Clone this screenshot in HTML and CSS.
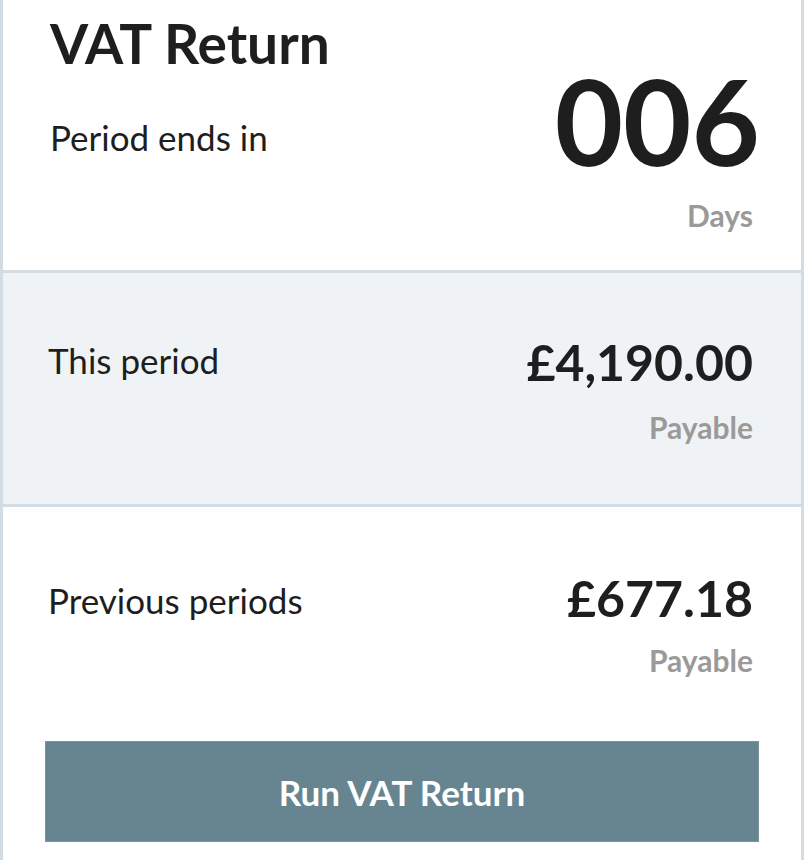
FILE: index.html
```html
<!DOCTYPE html>
<html>
<head>
<meta charset="utf-8">
<link rel="stylesheet" href="styles.css">
</head>
<body>
<div class="card">
  <section class="top">
    <div class="top-left">
      <h1 class="title">VAT Return</h1>
      <div class="label period">Period ends in</div>
    </div>
    <div class="top-right">
      <div class="days">006</div>
      <div class="sub">Days</div>
    </div>
  </section>
  <section class="row shaded">
    <div class="label">This period</div>
    <div class="amount-box">
      <div class="amount">£4,190.00</div>
      <div class="sub">Payable</div>
    </div>
  </section>
  <section class="bottom">
    <div class="row plain">
      <div class="label">Previous periods</div>
      <div class="amount-box">
        <div class="amount">£677.18</div>
        <div class="sub">Payable</div>
      </div>
    </div>
    <button class="btn">Run VAT Return</button>
  </section>
</div>
</body>
</html>
```
FILE: styles.css
```css
html, body {
  margin: 0;
  padding: 0;
  background: #ffffff;
}
body {
  font-family: Lato, "Open Sans", sans-serif;
  color: #1e1e1e;
}
.card {
  width: 804px;
  height: 860px;
  box-sizing: border-box;
  border-left: 3px solid #d3dce2;
  border-right: 3px solid #d3dce2;
  display: flex;
  flex-direction: column;
  overflow: hidden;
}
.top {
  height: 273px;
  box-sizing: border-box;
  border-bottom: 3px solid #d3dce2;
  display: flex;
  justify-content: space-between;
  padding: 0 48px 0 47px;
  flex-shrink: 0;
}
.title {
  margin: 10px 0 0 0;
  font-size: 55px;
  font-weight: 700;
  line-height: 1.2;
}
.label {
  font-size: 35px;
  font-weight: 400;
  line-height: 1.2;
}
.period {
  margin-top: 40px;
}
.top-right {
  display: flex;
  flex-direction: column;
  align-items: flex-end;
}
.days {
  font-size: 118px;
  font-weight: 700;
  line-height: 118px;
  margin-top: 62px;
  margin-right: -7px;
}
.sub {
  color: #9a9a9a;
  font-size: 30px;
  font-weight: 700;
  line-height: 1.2;
}
.top-right .sub {
  margin-top: 17px;
}
.row {
  display: flex;
  justify-content: space-between;
  align-items: flex-start;
  padding: 0 48px 0 45px;
}
.shaded {
  background: #eff3f5;
  height: 234px;
  box-sizing: border-box;
  border-bottom: 3px solid #d3dce2;
  padding-top: 59px;
  flex-shrink: 0;
}
.shaded .label {
  margin-top: 7px;
}
.amount-box {
  display: flex;
  flex-direction: column;
  align-items: flex-end;
}
.amount {
  font-size: 50px;
  font-weight: 700;
  line-height: 1.2;
}
.shaded .sub {
  margin-top: 17px;
}
.bottom {
  display: flex;
  flex-direction: column;
  padding: 0 42px;
}
.plain {
  padding: 61px 6px 0 3px;
}
.plain .label {
  margin-top: 11px;
}
.plain .sub {
  margin-top: 14px;
}
.btn {
  margin-top: 63px;
  height: 101px;
  background: #668591;
  border: 1px solid #7b96a0;
  color: #ffffff;
  font-family: Lato, "Open Sans", sans-serif;
  font-size: 35px;
  font-weight: 700;
  cursor: pointer;
}
```
